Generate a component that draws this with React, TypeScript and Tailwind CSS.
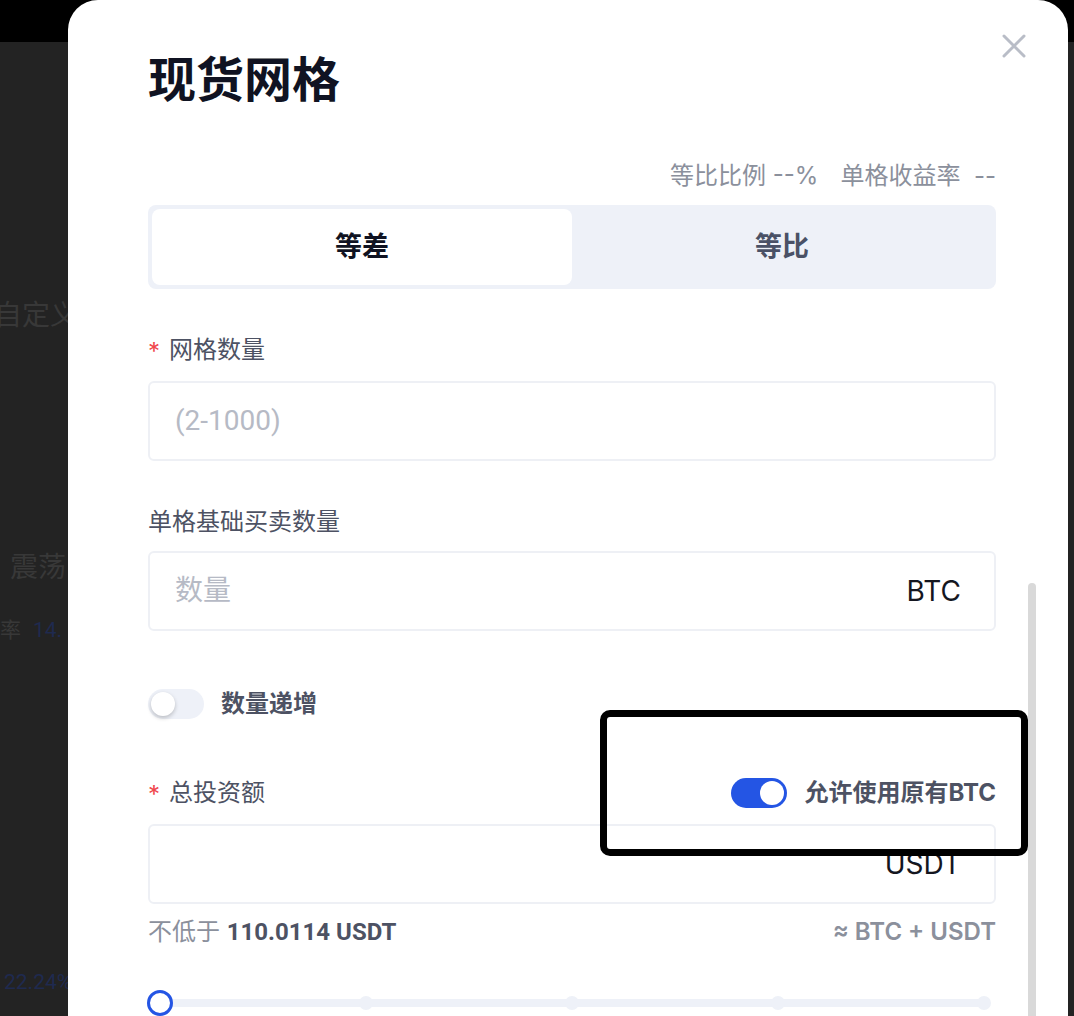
import React from "react";

const CJK = { fontFamily: '"Inter", "Noto Sans CJK SC", sans-serif' };
const NUM = { fontFamily: '"Roboto", "Noto Sans CJK SC", sans-serif' };

function Toggle({ on }: { on: boolean }) {
  return (
    <div
      className={
        "flex h-[30px] w-[56px] shrink-0 items-center rounded-full px-[3px] " +
        (on ? "justify-end bg-[#2455e4]" : "justify-start bg-[#eef1f8]")
      }
    >
      <div
        className={
          "h-[24px] w-[24px] rounded-full bg-white " +
          (on ? "" : "shadow-[0_2px_4px_rgba(0,0,0,0.22)]")
        }
      />
    </div>
  );
}

function Label({ text, required }: { text: string; required?: boolean }) {
  return (
    <div className="flex h-[28px] items-center text-[24px] leading-[28px] text-[#4d5263]">
      {required && <span className="mr-[9px] mt-[4px] text-[#f0474d]">*</span>}
      <span>{text}</span>
    </div>
  );
}

function Field({ placeholder, unit }: { placeholder?: string; unit?: string }) {
  return (
    <div className="flex h-[80px] items-center justify-between rounded-[6px] border-2 border-[#eef0f5] bg-white pl-[25px] pr-[33px]">
      <span className="text-[28px] text-[#b6bac5]" style={NUM}>
        {placeholder}
      </span>
      {unit && <span className="text-[28px] text-[#14161f]">{unit}</span>}
    </div>
  );
}

export default function App() {
  return (
    <div
      className="relative h-[1016px] w-[1074px] overflow-hidden bg-[#232323]"
      style={CJK}
    >
      {/* background page under the dim overlay */}
      <div className="flex h-full flex-col">
        <div className="h-[42px] shrink-0 bg-black" />
        <div className="ml-[-6px] mt-[256px] whitespace-nowrap text-[28px] leading-[34px] text-[#383838]">自定义</div>
        <div className="ml-[10px] mt-[218px] whitespace-nowrap text-[28px] leading-[34px] text-[#383838]">震荡</div>
        <div className="mt-[32px] flex items-center gap-[12px] whitespace-nowrap text-[21px] leading-[28px]">
          <span className="text-[#383838]">率</span>
          <span className="text-[#1f2a4f]" style={NUM}>14.</span>
        </div>
        <div className="ml-[4px] mt-[324px] whitespace-nowrap text-[21px] leading-[28px] text-[#1f2a4f]" style={NUM}>
          22.24%
        </div>
      </div>

      {/* modal */}
      <div className="absolute left-[68px] top-0 h-[1060px] w-[1000px] rounded-t-[30px] bg-white">
        {/* close */}
        <svg
          className="absolute left-[934px] top-[34px]"
          width="24"
          height="24"
          viewBox="0 0 24 24"
          fill="none"
          stroke="#b9bdc7"
          strokeWidth="3"
          strokeLinecap="round"
        >
          <path d="M2 2 L22 22 M22 2 L2 22" />
        </svg>

        {/* scrollbar */}
        <div className="absolute left-[960px] top-[583px] h-[500px] w-[8px] rounded-full bg-[#d9d9d9]" />

        <div className="flex flex-col pl-[80px] pr-[72px] pt-[56px]">
          <div className="text-[48px] font-bold leading-[48px] text-[#101322]">现货网格</div>

          <div className="mt-[58px] flex justify-end gap-[22px] text-[24px] leading-[28px] text-[#8b909c]">
            <span>等比比例 --%</span>
            <span>单格收益率&nbsp;&nbsp;--</span>
          </div>

          <div className="mt-[15px] grid h-[84px] grid-cols-2 rounded-[8px] bg-[#eef1f8] p-[4px]">
            <div className="flex items-center justify-center rounded-[8px] bg-white text-[27px] font-bold text-[#101322]">
              等差
            </div>
            <div className="flex items-center justify-center text-[27px] font-bold text-[#4a5166]">
              等比
            </div>
          </div>

          <div className="mt-[47px]">
            <Label text="网格数量" required />
          </div>
          <div className="mt-[17px]">
            <Field placeholder="(2-1000)" />
          </div>

          <div className="mt-[47px]">
            <Label text="单格基础买卖数量" />
          </div>
          <div className="mt-[15px]">
            <Field placeholder="数量" unit="BTC" />
          </div>

          <div className="mt-[57px] flex h-[32px] items-center gap-[17px]">
            <Toggle on={false} />
            <span className="text-[24px] font-bold text-[#4d5263]">数量递增</span>
          </div>

          <div className="mt-[57px] flex h-[32px] items-center justify-between">
            <Label text="总投资额" required />
            <div className="flex items-center gap-[17px]">
              <Toggle on />
              <span className="text-[24px] font-bold text-[#4d5263]">允许使用原有BTC</span>
            </div>
          </div>

          <div className="mt-[15px]">
            <Field unit="USDT" />
          </div>

          <div className="mt-[14px] flex h-[28px] items-center justify-between text-[24px] leading-[28px]">
            <span className="text-[#8b909c]">
              不低于 <span className="font-bold text-[#4d5263]" style={NUM}>110.0114 USDT</span>
            </span>
            <span className="font-semibold text-[#8b909c]">≈ BTC + USDT</span>
          </div>

          <div className="relative mx-[12px] mt-[43px] h-[28px]">
            <div className="absolute left-0 right-0 top-[10px] h-[8px] rounded-full bg-[#eef1f8]" />
            {[25, 50, 75, 100].map((p) => (
              <div
                key={p}
                className="absolute top-[7px] h-[14px] w-[14px] -translate-x-1/2 rounded-full bg-[#eef1f8]"
                style={{ left: `${p}%` }}
              />
            ))}
            <div className="absolute left-[-13px] top-[1px] h-[26px] w-[26px] rounded-full border-[3px] border-[#2455e4] bg-white" />
          </div>
        </div>

        {/* annotation highlight */}
        <div className="absolute left-[532px] top-[710px] h-[146px] w-[428px] rounded-[10px] border-[7px] border-black" />
      </div>
    </div>
  );
}
